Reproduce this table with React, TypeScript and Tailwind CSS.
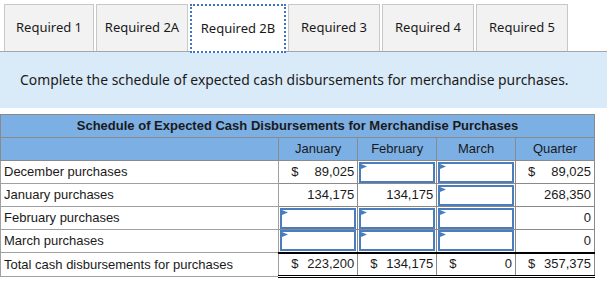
import React from 'react';

const tabs = [
  { label: 'Required 1', w: 'w-[90px]' },
  { label: 'Required 2A', w: 'w-[92px]' },
  { label: 'Required 2B', w: 'w-[96px]', active: true },
  { label: 'Required 3', w: 'w-[92px]' },
  { label: 'Required 4', w: 'w-[92px]' },
  { label: 'Required 5', w: 'w-[92px]' },
];

type Cell = { input?: boolean; dollar?: boolean; value?: string };

const rows: { label: string; cells: Cell[] }[] = [
  {
    label: 'December purchases',
    cells: [{ dollar: true, value: '89,025' }, { input: true }, { input: true }, { dollar: true, value: '89,025' }],
  },
  {
    label: 'January purchases',
    cells: [{ value: '134,175' }, { value: '134,175' }, { input: true }, { value: '268,350' }],
  },
  {
    label: 'February purchases',
    cells: [{ input: true }, { input: true }, { input: true }, { value: '0' }],
  },
  {
    label: 'March purchases',
    cells: [{ input: true }, { input: true }, { input: true }, { value: '0' }],
  },
];

const totals: Cell[] = [
  { dollar: true, value: '223,200' },
  { dollar: true, value: '134,175' },
  { dollar: true, value: '0' },
  { dollar: true, value: '357,375' },
];

const InputBox = () => (
  <div className="relative h-[21px] w-full border-2 border-[#4a7dbd] bg-white">
    <svg className="absolute left-0 top-0" width="6" height="5" viewBox="0 0 6 5">
      <polygon points="0,0 6,2.5 0,5" fill="#4a7dbd" />
    </svg>
  </div>
);

const ValueCell = ({ cell }: { cell: Cell }) => {
  if (cell.input) return <InputBox />;
  return (
    <div className="flex h-[21px] items-center justify-between pl-[12px] pr-[3px]">
      <span>{cell.dollar ? '$' : ''}</span>
      <span>{cell.value}</span>
    </div>
  );
};

export default function App() {
  return (
    <div className="h-[282px] w-[607px] overflow-hidden bg-white" style={{ fontFamily: '"Noto Sans", sans-serif' }}>
      <div className="flex gap-[2px] border-b border-[#a6a6a6] pl-[4px] pt-[4px]">
        {tabs.map((t) =>
          t.active ? (
            <div
              key={t.label}
              className={`${t.w} -mb-[2px] flex h-[49px] items-center justify-center border-2 border-dotted border-[#3e77c0] bg-white text-[13px] text-[#1a1a1a]`}
            >
              {t.label}
            </div>
          ) : (
            <div
              key={t.label}
              className={`${t.w} flex h-[47px] items-center justify-center border border-b-0 border-[#c8c8c8] bg-[#f2f2f2] text-[13px] text-[#1a1a1a]`}
            >
              {t.label}
            </div>
          )
        )}
      </div>
      <div className="flex h-[56px] items-center bg-[#d9eaf8] pl-[20px] text-[13.9px] text-[#1a1a1a]">
        Complete the schedule of expected cash disbursements for merchandise purchases.
      </div>

      <table
        className="mt-[6px] w-[595px] border-collapse text-[13px] text-[#1a1a1a]"
        style={{ fontFamily: '"Liberation Sans", Arial, sans-serif' }}
      >
        <colgroup>
          <col className="w-[279px]" />
          <col className="w-[79px]" />
          <col className="w-[79px]" />
          <col className="w-[79px]" />
          <col className="w-[79px]" />
        </colgroup>
        <thead>
          <tr className="h-[23px] bg-[#7cafe4]">
            <th colSpan={5} className="border border-[#8a8a8a] p-0 text-center font-bold">
              Schedule of Expected Cash Disbursements for Merchandise Purchases
            </th>
          </tr>
          <tr className="h-[23px] bg-[#7cafe4]">
            <th className="border border-[#8a8a8a] p-0"></th>
            <th className="border border-[#8a8a8a] p-0 text-center font-normal">January</th>
            <th className="border border-[#8a8a8a] p-0 text-center font-normal">February</th>
            <th className="border border-[#8a8a8a] p-0 text-center font-normal">March</th>
            <th className="border border-[#8a8a8a] p-0 text-center font-normal">Quarter</th>
          </tr>
        </thead>
        <tbody>
          {rows.map((r) => (
            <tr key={r.label} className="h-[23px]">
              <td className="border border-[#a0a0a0] px-[3px] py-0">{r.label}</td>
              {r.cells.map((c, i) => (
                <td key={i} className={`border border-[#8a8a8a] py-0 ${c.input ? 'px-[1px]' : 'px-0'}`}>
                  <ValueCell cell={c} />
                </td>
              ))}
            </tr>
          ))}
          <tr className="h-[23px]">
            <td className="border border-[#a0a0a0] px-[3px] py-0">Total cash disbursements for purchases</td>
            {totals.map((c, i) => (
              <td
                key={i}
                className="border border-x-[#8a8a8a] border-t-2 border-t-black border-b-[3px] border-b-black border-double px-0 py-0"
                style={{ borderTopStyle: 'solid', borderLeftStyle: 'solid', borderRightStyle: 'solid' }}
              >
                <ValueCell cell={c} />
              </td>
            ))}
          </tr>
        </tbody>
      </table>
    </div>
  );
}
